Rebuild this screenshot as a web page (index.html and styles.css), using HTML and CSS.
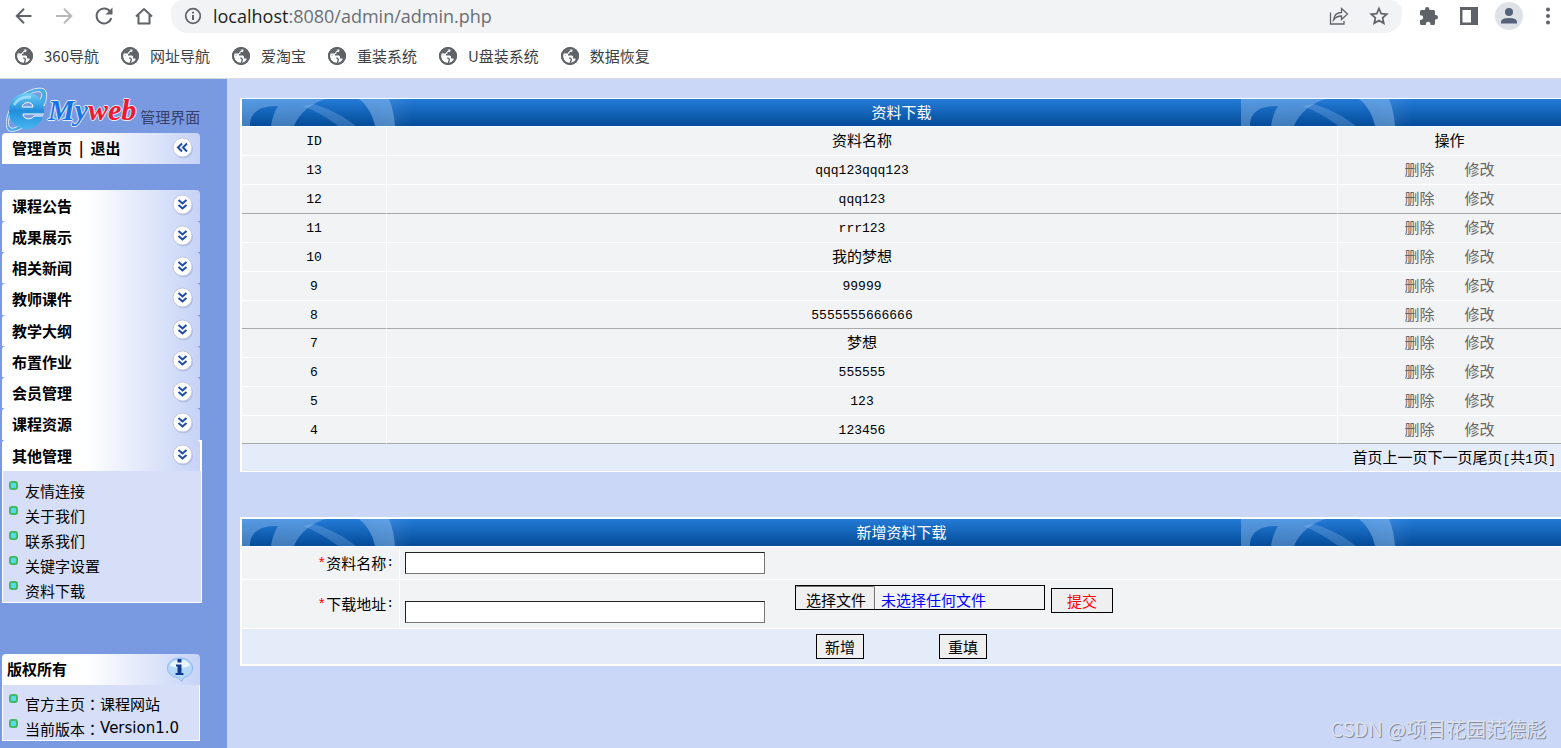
FILE: index.html
```html
<!DOCTYPE html>
<html lang="zh-CN">
<head>
<meta charset="utf-8">
<title>资料下载</title>
<link rel="stylesheet" href="styles.css">
</head>
<body>
<svg class="defs" width="0" height="0" aria-hidden="true">
  <defs>
    <linearGradient id="haze" x1="0" x2="1" y1="0" y2="0">
      <stop offset="0" stop-color="#a8cdf6" stop-opacity=".38"/>
      <stop offset=".5" stop-color="#a8cdf6" stop-opacity=".36"/>
      <stop offset="1" stop-color="#a8cdf6" stop-opacity=".46"/>
    </linearGradient>
    <linearGradient id="fade" x1="0" x2="1" y1="0" y2="0">
      <stop offset="0" stop-color="#a8cdf6" stop-opacity=".12"/>
      <stop offset="1" stop-color="#a8cdf6" stop-opacity="0"/>
    </linearGradient>
    <pattern id="arcs" width="1000" height="27" patternUnits="userSpaceOnUse" x="-1">
      <path fill="url(#haze)" fill-rule="evenodd" d="M0 0H148Q153 12 154 27H0ZM9 27C9 12 20 7 37 7C33 13 31 20 30 27ZM53 27C58 14 72 3 85 0H118C128 8 132 18 134 27Z"/>
      <path fill="#a8cdf6" fill-opacity=".25" d="M62 7L72 5C90 10 105 19 115 27H97C87 19 75 12 62 7Z"/>
      <path fill="url(#fade)" d="M148 0H172V27H154Q153 12 148 0Z"/>
    </pattern>
    <symbol id="globe" viewBox="0 0 18 18">
      <circle cx="9" cy="9" r="9" fill="#5f6368"/>
      <path fill="#fff" d="M2 8L6.500 8.500 8 10V11.500L9.500 12V13.500L8.500 16C5 16 2 13 2 9ZM11.500 2.300V4L10.500 5H8.500V6.500L7 7V8.500H11L12 9.500V11.500H14.500V13Q12.500 15.500 10 16L11 13V12L9.500 10.500H8L5 8H2A7 7 0 0 1 6 2.700H9V2Z"/>
      <path fill="#5f6368" d="M3.500 4L7 2.500H10.500L8 4.500 6.500 6.500H3Z"/>
      <circle cx="9" cy="9" r="8" fill="none" stroke="#5f6368" stroke-width="2"/>
    </symbol>
    <symbol id="down" viewBox="0 0 22 22">
      <circle cx="11.500" cy="12" r="9.500" fill="#8ea2cf" opacity=".45"/>
      <circle cx="10.500" cy="10.500" r="9.500" fill="#fff" stroke="#c3c8dc"/>
      <path fill="none" stroke="#1c4bab" stroke-width="2" d="M6.500 6L10.500 9.500 14.500 6M6.500 11L10.500 14.500 14.500 11"/>
    </symbol>
    <symbol id="left" viewBox="0 0 22 22">
      <circle cx="11.500" cy="12" r="9.500" fill="#8ea2cf" opacity=".45"/>
      <circle cx="10.500" cy="10.500" r="9.500" fill="#fff" stroke="#c3c8dc"/>
      <path fill="none" stroke="#1c4bab" stroke-width="2" d="M10 6.500L6 10.500 10 14.500M15 6.500L11 10.500 15 14.500"/>
    </symbol>
  </defs>
</svg>

<header class="browser">
  <div class="toolbar">
    <button class="tool" aria-label="后退"><svg width="20" height="20" viewBox="0 0 20 20"><path d="M17.500 10H3M10 2.800L2.800 10 10 17.200" class="line"/></svg></button>
    <button class="tool dim" aria-label="前进"><svg width="20" height="20" viewBox="0 0 20 20"><path d="M2 10H17M10 2.800L17.200 10 10 17.200" class="line"/></svg></button>
    <button class="tool" aria-label="刷新"><svg width="20" height="20" viewBox="0 0 20 20"><path d="M16.500 6A7.500 7.500 0 1 0 17.300 12" class="line"/><path d="M18.500 1.500V8.500H11.500Z" fill="#5f6368"/></svg></button>
    <button class="tool" aria-label="主页"><svg width="20" height="20" viewBox="0 0 20 20"><path d="M2 10.500L10 3 18 10.500M4.500 9V17.500H15.500V9" class="line"/></svg></button>
    <div class="address">
      <svg width="18" height="18" viewBox="0 0 18 18"><circle cx="9" cy="9" r="7.300" class="line thin"/><path d="M9 8V13M9 4.700V6.500" class="line"/></svg>
      <div class="url" role="textbox" aria-label="地址" contenteditable="true" spellcheck="false"><span class="host">localhost</span>:8080/admin/admin.php</div>
      <button class="tool" aria-label="分享"><svg width="20" height="20" viewBox="0 0 20 20"><path d="M1.500 6.500V18H15V15M4.500 14Q5.500 6.500 12.500 6.500V2.500L18.500 8 12.500 13.500V10Q7.500 10 4.500 14Z" class="line fine"/></svg></button>
      <button class="tool" aria-label="收藏"><svg width="20" height="20" viewBox="0 0 20 20"><path d="M10 2.500L12.200 7.600 17.800 8.100 13.600 11.800 14.800 17.300 10 14.400 5.200 17.300 6.400 11.800 2.200 8.100 7.800 7.600Z" class="line thin"/></svg></button>
    </div>
    <button class="tool" aria-label="扩展程序"><svg width="20" height="20" viewBox="0 0 20 20"><path fill="#5f6368" d="M1 5.500Q1 4 2.500 4H6V3.200A2.200 2.200 0 0 1 10.400 3.200V4H14.500Q16 4 16 5.500V9H16.800A2.200 2.200 0 0 1 16.800 13.400H16V17.500Q16 19 14.500 19H11.500V18A2.300 2.300 0 0 0 6.900 18V19H2.500Q1 19 1 17.500V14H1.800A2.300 2.300 0 0 0 1.800 9.200H1Z"/></svg></button>
    <button class="tool" aria-label="侧边栏"><svg width="20" height="20" viewBox="0 0 20 20"><path fill="#5f6368" fill-rule="evenodd" d="M1 1H19V19H1ZM3.500 4V16.500H12V4Z"/></svg></button>
    <button class="tool" aria-label="用户"><svg width="28" height="28" viewBox="0 0 28 28"><circle cx="14" cy="14" r="14" fill="#dee1e6"/><circle cx="14" cy="10" r="4" fill="#56617a"/><path fill="#56617a" d="M6 21.500V20Q6 16 14 16T22 20V21.500Z"/></svg></button>
    <button class="tool more" aria-label="更多"><svg width="6" height="20" viewBox="0 0 6 20"><g fill="#5f6368"><circle cx="3" cy="3.500" r="2"/><circle cx="3" cy="10" r="2"/><circle cx="3" cy="16.500" r="2"/></g></svg></button>
  </div>
  <nav class="bookmarks">
    <a href="#"><svg width="18" height="18"><use href="#globe"/></svg>360导航</a>
    <a href="#"><svg width="18" height="18"><use href="#globe"/></svg>网址导航</a>
    <a href="#"><svg width="18" height="18"><use href="#globe"/></svg>爱淘宝</a>
    <a href="#"><svg width="18" height="18"><use href="#globe"/></svg>重装系统</a>
    <a href="#"><svg width="18" height="18"><use href="#globe"/></svg>U盘装系统</a>
    <a href="#"><svg width="18" height="18"><use href="#globe"/></svg>数据恢复</a>
  </nav>
</header>

<div class="workspace">
  <aside class="sidebar">
    <div class="logo">
      <svg width="42" height="46" viewBox="0 0 42 46">
        <defs><linearGradient id="ie" x1="0" y1="0" x2="0" y2="1"><stop offset="0" stop-color="#6fcdf5"/><stop offset=".5" stop-color="#1f8fdc"/><stop offset="1" stop-color="#49b4ee"/></linearGradient></defs>
        <path fill="#4aa9e4" stroke="#dceaf8" d="M8 14C18 4 32-1 38 2C42 5 41 13 38 19L33 14C36 9 37 6 34 5C28 3 14 11 6 24C1 33 2 40 5 41C8 42 13 39 16 36L19 39C13 44 5 46 2 43C-2 38 1 25 8 14Z"/>
        <path fill="url(#ie)" fill-rule="evenodd" d="M21 6C33 6 39 15 38 27H17C17 33 26 33 28 29H37C35 37 29 42 21 42C10 42 3 34 3 24S10 6 21 6ZM16 20H27C27 14 17 14 16 20Z"/>
        <path fill="none" stroke="#fff" d="M16 20H27C27 14 17 14 16 20ZM38 27H17C17 33 26 33 28 29H37"/>
        <path fill="none" stroke="#b5e8fb" stroke-width="3" stroke-opacity=".7" d="M8 18Q13 9 25 10"/>
      </svg>
      <span class="brand"><span class="my">My</span>web</span>
      <span class="brand-note">管理界面</span>
    </div>
    <div class="head home">
      <span class="links"><a href="#">管理首页</a><span>|</span><a href="#">退出</a></span>
      <button class="fold" aria-label="收起"><svg width="22" height="22"><use href="#left"/></svg></button>
    </div>
    <nav class="menu">
      <button class="head">课程公告<svg width="22" height="22"><use href="#down"/></svg></button>
      <button class="head">成果展示<svg width="22" height="22"><use href="#down"/></svg></button>
      <button class="head">相关新闻<svg width="22" height="22"><use href="#down"/></svg></button>
      <button class="head">教师课件<svg width="22" height="22"><use href="#down"/></svg></button>
      <button class="head">教学大纲<svg width="22" height="22"><use href="#down"/></svg></button>
      <button class="head">布置作业<svg width="22" height="22"><use href="#down"/></svg></button>
      <button class="head">会员管理<svg width="22" height="22"><use href="#down"/></svg></button>
      <button class="head">课程资源<svg width="22" height="22"><use href="#down"/></svg></button>
      <div class="open">
        <button class="head" aria-expanded="true">其他管理<svg width="22" height="22"><use href="#down"/></svg></button>
        <ul class="items">
          <li><a href="#">友情连接</a></li>
          <li><a href="#">关于我们</a></li>
          <li><a href="#">联系我们</a></li>
          <li><a href="#">关键字设置</a></li>
          <li><a href="#">资料下载</a></li>
        </ul>
      </div>
    </nav>
    <section class="about">
      <h2 class="head">版权所有
        <svg width="28" height="26" viewBox="0 0 28 26"><path fill="#b4d8f8" stroke="#8db8ea" d="M14 1C21 1 26.500 5 26.500 11C26.500 16 22.500 19.500 18 20.500L15.500 24.500 12 20.500C5.500 20 1.500 16 1.500 11C1.500 5 7 1 14 1Z"/><path fill="#e8f5fe" d="M14 3C19 3 23 5 24 9Q14 13 4 9C5 5 9 3 14 3Z"/><path fill="#123a94" d="M11.500 2H15.500V5.500H11.500ZM10 7.500H15.500V16H17.500V18H9.500V16H11.500V9.500H10Z"/></svg>
      </h2>
      <ul class="items">
        <li>官方主页<span class="colon">：</span><a href="#">课程网站</a></li>
        <li>当前版本<span class="colon">：</span><span class="version">Version1.0</span></li>
      </ul>
    </section>
  </aside>

  <main class="content">
    <section class="panel">
      <h1 class="title"><svg class="deco" width="100%" height="27"><rect width="100%" height="27" fill="url(#arcs)"/></svg><span>资料下载</span></h1>
      <table class="list">
        <colgroup><col class="col-id"><col><col class="col-act"></colgroup>
        <thead><tr><th scope="col" class="code">ID</th><th scope="col">资料名称</th><th scope="col">操作</th></tr></thead>
        <tbody>
          <tr><td class="code">13</td><td class="code">qqq123qqq123</td><td><a href="#">删除</a><a href="#">修改</a></td></tr>
          <tr class="ruled"><td class="code">12</td><td class="code">qqq123</td><td><a href="#">删除</a><a href="#">修改</a></td></tr>
          <tr><td class="code">11</td><td class="code">rrr123</td><td><a href="#">删除</a><a href="#">修改</a></td></tr>
          <tr><td class="code">10</td><td>我的梦想</td><td><a href="#">删除</a><a href="#">修改</a></td></tr>
          <tr><td class="code">9</td><td class="code">99999</td><td><a href="#">删除</a><a href="#">修改</a></td></tr>
          <tr class="ruled short"><td class="code">8</td><td class="code">5555555666666</td><td><a href="#">删除</a><a href="#">修改</a></td></tr>
          <tr><td class="code">7</td><td>梦想</td><td><a href="#">删除</a><a href="#">修改</a></td></tr>
          <tr><td class="code">6</td><td class="code">555555</td><td><a href="#">删除</a><a href="#">修改</a></td></tr>
          <tr><td class="code">5</td><td class="code">123</td><td><a href="#">删除</a><a href="#">修改</a></td></tr>
          <tr class="ruled short"><td class="code">4</td><td class="code">123456</td><td><a href="#">删除</a><a href="#">修改</a></td></tr>
        </tbody>
      </table>
      <div class="pager">首页上一页下一页尾页<span class="code">[</span>共<span class="code">1</span>页<span class="code">]</span></div>
    </section>

    <form class="panel editor" onsubmit="return false">
      <h2 class="title"><svg class="deco" width="100%" height="27"><rect width="100%" height="27" fill="url(#arcs)"/></svg><span>新增资料下载</span></h2>
      <div class="field">
        <label for="name"><span class="star">*</span>资料名称<span class="code">:</span></label>
        <div class="value"><input class="text" type="text" id="name"></div>
      </div>
      <div class="field">
        <label for="path"><span class="star">*</span>下载地址<span class="code">:</span></label>
        <div class="value">
          <input class="text" type="text" id="path">
          <div class="upload">
            <label class="file"><input type="file"><span class="pick">选择文件</span><span class="chosen">未选择任何文件</span></label>
            <button class="btn send" type="button">提交</button>
          </div>
        </div>
      </div>
      <div class="actions">
        <button class="btn" type="submit">新增</button>
        <button class="btn" type="reset">重填</button>
      </div>
    </form>
  </main>
</div>
<div class="watermark">CSDN @项目花园范德彪</div>
</body>
</html>
```
FILE: styles.css
```css
*, *::before { box-sizing: border-box; }

body {
  margin: 0;
  min-height: 100vh;
  display: flex;
  flex-direction: column;
  background: #cad7f7;
  color: #000;
  font: 15px/20px "Noto Sans CJK SC", sans-serif;
}

a { color: inherit; text-decoration: none; }
button { font: inherit; color: inherit; padding: 0; border: 0; background: none; }
h1, h2, ul { margin: 0; padding: 0; font: inherit; list-style: none; }
svg { display: block; flex: none; }
.defs { position: absolute; }

/* browser chrome */
.browser { background: #fff; border-bottom: 1px solid #d9dbde; height: 79px; }
.toolbar { display: flex; height: 33px; padding-left: 4px; }
.tool { width: 40px; height: 31px; flex: none; display: flex; align-items: center; justify-content: center; }
.more { width: 32px; padding-left: 6px; }
.dim { opacity: .45; }
.line { fill: none; stroke: #5f6368; stroke-width: 2; }
.thin { stroke-width: 1.7; }
.fine { stroke-width: 1.3; }
.address {
  flex: 1;
  min-width: 0;
  display: flex;
  align-items: center;
  margin: 0 7px;
  padding: 0 3px 2px 13px;
  background: #f1f3f4;
  border-radius: 12px 12px 17px 17px;
}
.url {
  flex: 1;
  min-width: 0;
  margin-left: 11px;
  font: 18px/22px "Open Sans", "Noto Sans", sans-serif;
  color: #6b6f74;
  white-space: nowrap;
}
.host { color: #1d1f22; }
.bookmarks { display: flex; gap: 22px; padding: 13px 15px 0; color: #3c4043; white-space: nowrap; }
.bookmarks a { display: flex; align-items: center; gap: 11px; }

/* layout */
.workspace { flex: 1; display: flex; }
.sidebar { width: 227px; flex: none; padding: 8px 0 7px 2px; background: #799ae1; }
.content { flex: 1; min-width: 0; padding: 19px 0 0 13px; }

/* sidebar */
.logo { display: flex; height: 46px; padding-left: 4px; white-space: nowrap; }
.brand {
  font: italic bold 30px/46px "Liberation Serif", serif;
  color: #f5152f;
  text-shadow: 1px 0 #e4ecfa, -1px 0 #e4ecfa, 0 1px #e4ecfa, 0 -1px #e4ecfa;
}
.my { color: #1673e8; }
.brand-note { margin: 20px 0 0 4px; color: #37406a; }
.head {
  width: 198px;
  height: 31px;
  display: flex;
  align-items: flex-start;
  justify-content: space-between;
  padding: 4px 6px 0 10px;
  border-radius: 4px 4px 0 0;
  background: linear-gradient(90deg, #fff 42%, #c6d3f7);
  font-weight: bold;
  line-height: 24px;
}
.home { line-height: 22px; }
.links { display: flex; gap: 7px; }
.menu { margin-top: 26px; }
.menu > .head:nth-child(4n) { height: 32px; }
.open { width: 200px; background: #fff; border-radius: 4px 0 0 0; }
.items { padding: 6px 0 0 6px; background: #d6dff7; border: 1px solid #fff; border-top: 0; }
.items li { display: flex; height: 25px; line-height: 27px; }
.items li::before {
  content: "";
  width: 9px;
  height: 9px;
  margin: 4px 7px 0 0;
  border: 2px solid #43b866;
  border-radius: 3px;
  background: #54dcf5;
}
.about { width: 198px; margin-top: 51px; }
.about .head { padding: 3px 6px 0 5px; }
.colon { font-family: "Noto Sans CJK TC", sans-serif; }
.about .items { padding-top: 5px; }
.version { font-family: "DejaVu Sans", sans-serif; }

/* panels */
.panel { border: solid #fff; border-width: 1px 0 0 2px; background: #f1f3f5; }
.title {
  position: relative;
  height: 28px;
  border-bottom: 1px solid #fff;
  background: linear-gradient(#247bd7, #034b98);
  color: #fff;
  line-height: 25px;
  text-align: center;
}
.title span { position: relative; }
.deco { position: absolute; left: 0; top: 0; }
.code { font-family: "Liberation Mono", monospace; font-size: 13px; }
.list { width: 100%; table-layout: fixed; border-collapse: separate; border-spacing: 0; }
.col-id { width: 145px; }
.col-act { width: 223px; }
.list tr { height: 29px; }
.list .short { height: 28px; }
.list th, .list td {
  padding: 0 0 2px;
  border: solid #fff;
  border-width: 0 1px 1px 0;
  font-weight: normal;
  text-align: center;
}
.list th:last-child, .list td:last-child { border-right: 0; }
.list .code { padding: 2px 0 0; }
.list .ruled td { border-bottom-color: #a9a9a9; }
.list a { color: #666; }
.list a + a { margin-left: 30px; }
.pager {
  height: 28px;
  padding-right: 5px;
  background: #e5ecf9;
  border-bottom: 1px solid #fff;
  line-height: 25px;
  text-align: right;
}

/* form */
.editor { margin-top: 45px; border-width: 2px 0 2px 2px; }
.field { display: flex; border-bottom: 1px solid #fff; }
.field > label {
  width: 158px;
  flex: none;
  display: flex;
  align-items: center;
  justify-content: flex-end;
  padding: 0 5px 1px 0;
  border-right: 1px solid #fff;
}
.star { padding-top: 5px; color: #f00; font: 15px/20px "Liberation Mono", monospace; }
.value { flex: 1; display: flex; align-items: flex-end; gap: 30px; padding: 5px; }
.text {
  width: 360px;
  height: 22px;
  padding: 1px 2px;
  border: 1px solid #767676;
  border-top-color: #222;
  border-left-color: #222;
  background: #fff;
  font: inherit;
}
.upload { display: flex; gap: 6px; padding-bottom: 10px; }
.file {
  width: 250px;
  height: 25px;
  display: flex;
  overflow: hidden;
  border: 1px solid #000;
  line-height: 27px;
}
.file input { position: absolute; width: 1px; height: 1px; opacity: 0; }
.pick { padding: 0 8px 0 10px; border: solid #767676; border-width: 1px 1px 0 0; border-radius: 2px 2px 0 0; background: #efefef; line-height: 25px; }
.chosen { margin-left: 6px; color: #00f; }
.btn { height: 25px; padding: 0 8px; border: 1px solid #000; background: #efefef; line-height: 23px; }
.send { margin-top: 3px; padding: 0 15px; color: #f00; }
.actions { display: flex; justify-content: center; gap: 75px; padding: 5px; background: #e5ecf9; }

.watermark {
  position: absolute;
  right: 15px;
  bottom: 5px;
  font-size: 20px;
  line-height: 28px;
  color: #dde2ee;
  text-shadow: 1px 1px #858b9b;
}
```
